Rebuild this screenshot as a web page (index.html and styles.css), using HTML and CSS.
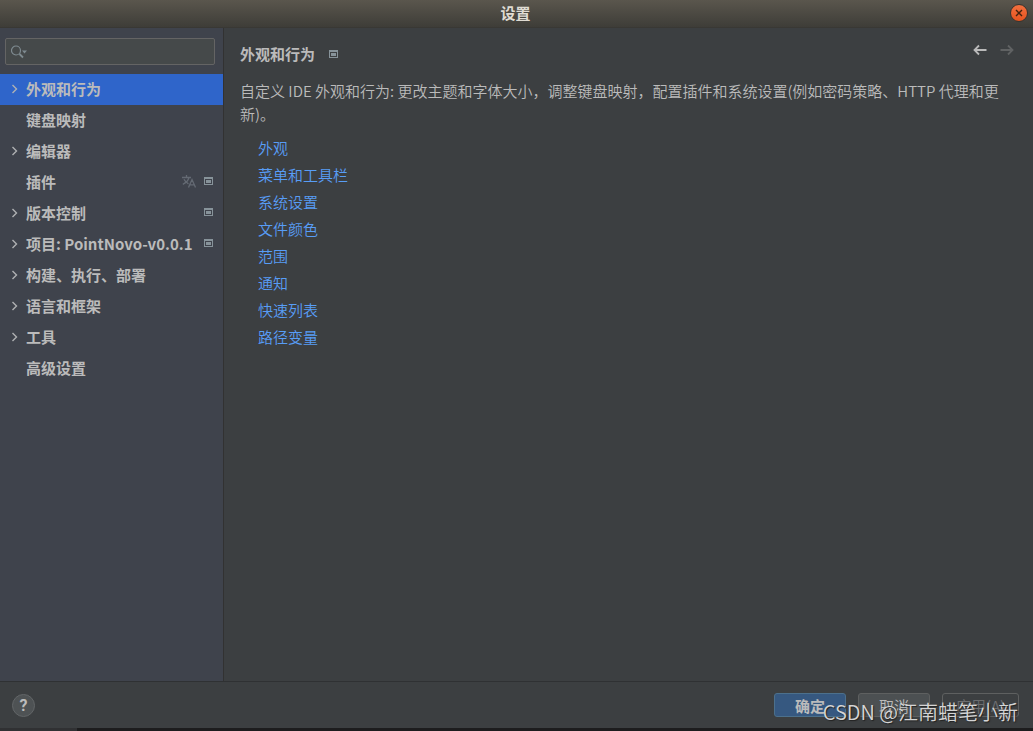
FILE: index.html
```html
<!DOCTYPE html>
<html lang="zh-CN">
<head>
<meta charset="utf-8">
<title>设置</title>
<link rel="stylesheet" href="styles.css">
</head>
<body>
<svg class="defs" width="0" height="0" aria-hidden="true">
  <symbol id="chevron" viewBox="0 0 8 10"><path d="M1.500 1l4 4-4 4" fill="none" stroke="currentColor" stroke-width="1.400"/></symbol>
  <symbol id="project" viewBox="0 0 9 8"><path d="M0 0h9v8H0zM1 2v5h7V2z" fill="currentColor" fill-rule="evenodd"/><path d="M2 3h5v3H2z" fill="currentColor"/></symbol>
</svg>
<div class="window">
  <header class="titlebar">
    <h1 class="window-title">设置</h1>
    <button class="close" type="button" aria-label="关闭"><svg width="8" height="8" viewBox="0 0 8 8"><path d="M1 1l6 6M7 1L1 7" stroke="currentColor" stroke-width="1.400"/></svg></button>
  </header>
  <div class="body">
    <aside class="sidebar">
      <div class="search">
        <svg class="search-icon" width="17" height="14" viewBox="0 0 17 14"><circle cx="5" cy="5.500" r="4.500" fill="none" stroke="currentColor" stroke-width="1.200"/><path d="M8.500 9l3.500 3.500" stroke="currentColor" stroke-width="1.800"/><path d="M11 5.500h5l-2.500 3z" fill="currentColor"/></svg>
        <input class="search-input" type="text" aria-label="搜索设置">
      </div>
      <nav class="tree">
        <button class="row selected" type="button"><svg class="chevron"><use href="#chevron"/></svg><span class="label">外观和行为</span></button>
        <button class="row" type="button"><span class="chevron"></span><span class="label">键盘映射</span></button>
        <button class="row" type="button"><svg class="chevron"><use href="#chevron"/></svg><span class="label">编辑器</span></button>
        <button class="row" type="button"><span class="chevron"></span><span class="label">插件</span><svg class="translate" width="14" height="13" viewBox="0 0 14 13"><path d="M0 2.500h9M4.500 0v2.500M7 2.500C6.200 5.500 3.500 8 .8 9.300M2 4.300C3.200 6.800 4.800 8 6.500 8.800M6.500 12.500L10 4.500l3.500 8M7.700 9.800h4.600" fill="none" stroke="currentColor" stroke-width="1.300"/></svg><svg class="project"><use href="#project"/></svg></button>
        <button class="row" type="button"><svg class="chevron"><use href="#chevron"/></svg><span class="label">版本控制</span><svg class="project"><use href="#project"/></svg></button>
        <button class="row" type="button"><svg class="chevron"><use href="#chevron"/></svg><span class="label">项目: PointNovo-v0.0.1</span><svg class="project"><use href="#project"/></svg></button>
        <button class="row" type="button"><svg class="chevron"><use href="#chevron"/></svg><span class="label">构建、执行、部署</span></button>
        <button class="row" type="button"><svg class="chevron"><use href="#chevron"/></svg><span class="label">语言和框架</span></button>
        <button class="row" type="button"><svg class="chevron"><use href="#chevron"/></svg><span class="label">工具</span></button>
        <button class="row" type="button"><span class="chevron"></span><span class="label">高级设置</span></button>
      </nav>
    </aside>
    <main class="content">
      <div class="heading">
        <h2 class="page-title">外观和行为</h2>
        <svg class="project"><use href="#project"/></svg>
        <div class="history">
          <button class="nav-button" type="button" aria-label="后退"><svg width="14" height="12" viewBox="0 0 14 12"><path d="M13.500 6H2M6 1.500L1.500 6 6 10.500" fill="none" stroke="currentColor" stroke-width="1.800"/></svg></button>
          <button class="nav-button" type="button" aria-label="前进" disabled><svg width="14" height="12" viewBox="0 0 14 12"><path d="M.5 6H12M8 1.500L12.500 6 8 10.500" fill="none" stroke="currentColor" stroke-width="1.800"/></svg></button>
        </div>
      </div>
      <p class="description">自定义 IDE 外观和行为: 更改主题和字体大小，调整键盘映射，配置插件和系统设置(例如密码策略、HTTP 代理和更新)。</p>
      <ul class="links">
        <li><a href="#">外观</a></li>
        <li><a href="#">菜单和工具栏</a></li>
        <li><a href="#">系统设置</a></li>
        <li><a href="#">文件颜色</a></li>
        <li><a href="#">范围</a></li>
        <li><a href="#">通知</a></li>
        <li><a href="#">快速列表</a></li>
        <li><a href="#">路径变量</a></li>
      </ul>
    </main>
  </div>
  <footer class="footer">
    <button class="help" type="button" aria-label="帮助">?</button>
    <div class="actions">
      <button class="button primary" type="button">确定</button>
      <button class="button" type="button">取消</button>
      <button class="button apply" type="button" disabled>应用(A)</button>
    </div>
    <span class="watermark">CSDN @江南蜡笔小新</span>
  </footer>
  <div class="desktop-edge"></div>
</div>
</body>
</html>
```
FILE: styles.css
```css
* { box-sizing: border-box; }
body {
  margin: 0;
  background: #3c3f41;
  color: #bbbbbb;
  font: 350 15px/23px "Noto Sans CJK SC", sans-serif;
}
button { font: inherit; color: inherit; border: 0; background: none; padding: 0; margin: 0; }
svg { display: block; flex: none; }
.defs { position: absolute; }
.window { display: flex; flex-direction: column; min-height: 100vh; }
.titlebar {
  display: grid;
  grid-template-columns: 1fr auto 1fr;
  align-items: center;
  height: 28px;
  padding: 0 5px 2px 3px;
  background: linear-gradient(#5a564d, #3e3d38);
  border-bottom: 1px solid #393834;
}
.window-title {
  grid-column: 2;
  margin: 0;
  font-size: 15px;
  font-weight: 700;
  color: #dfdbd2;
}
.close {
  justify-self: end;
  display: grid;
  place-items: center;
  width: 18px;
  height: 18px;
  border: 1px solid #38342e;
  border-radius: 50%;
  background: linear-gradient(#f2703f, #e5531f);
  color: #40220f;
}
.body { display: flex; flex: 1; }
.sidebar {
  width: 224px;
  flex: none;
  padding-top: 10px;
  background: #3f434c;
  border-right: 1px solid #323232;
}
.search {
  display: flex;
  align-items: center;
  height: 27px;
  margin: 0 8px 9px 5px;
  padding-left: 5px;
  border: 1px solid #646464;
  border-radius: 2px;
  background: #45494a;
}
.search-icon { color: #7f8b91; }
.search-input {
  flex: 1;
  min-width: 0;
  border: 0;
  outline: 0;
  background: transparent;
  color: inherit;
  font: inherit;
}
.row {
  display: flex;
  align-items: center;
  width: 100%;
  height: 31px;
  padding: 0 10px 2px 11px;
  font-weight: 700;
  text-align: left;
  white-space: nowrap;
}
.selected { background: #2f65ca; }
.chevron { width: 8px; height: 10px; margin-right: 7px; flex: none; color: #afb1b3; }
.label { flex: 1; }
.project { width: 9px; height: 8px; color: #87939a; }
.row .project { margin-bottom: 2px; }
.translate { margin-right: 8px; color: #646a73; }
.content { flex: 1; min-width: 0; padding: 14px 19px 0 16px; }
.heading { display: flex; align-items: center; height: 24px; }
.page-title { margin: 0 14px 0 0; font-size: 15px; font-weight: 700; line-height: 22px; }
.history { display: flex; gap: 13px; margin-left: auto; padding-bottom: 8px; }
.nav-button { color: #bababa; }
.nav-button:disabled { color: #606263; }
.description { margin: 13px 0 9px; }
.links { margin: 0; padding: 0 0 0 18px; list-style: none; line-height: 27px; }
.links a { color: #589df6; text-decoration: none; }
.footer {
  position: relative;
  display: flex;
  align-items: center;
  justify-content: space-between;
  height: 47px;
  padding: 0 14px 0 12px;
  border-top: 1px solid #2f3133;
}
.help {
  width: 23px;
  height: 23px;
  border: 1px solid #626567;
  border-radius: 50%;
  background: #4e5254;
  color: #bbbbbb;
  font: 700 16px/21px Roboto, sans-serif;
}
.actions { display: flex; gap: 12px; }
.button {
  width: 72px;
  height: 24px;
  border: 1px solid #5e6060;
  border-radius: 3px;
  background: #4c5052;
}
.primary { background: #365880; border-color: #4c708c; font-weight: 700; }
.apply { width: 77px; background: transparent; color: #6c6e70; }
.watermark {
  position: absolute;
  right: 15px;
  bottom: 1px;
  color: #d5d5d5;
  font-size: 20px;
  line-height: 30px;
  text-shadow: 1px 1px 1px #222222;
  pointer-events: none;
}
.desktop-edge { height: 3px; background: linear-gradient(90deg, #303133 77px, #1d1d1e 77px); }
```
